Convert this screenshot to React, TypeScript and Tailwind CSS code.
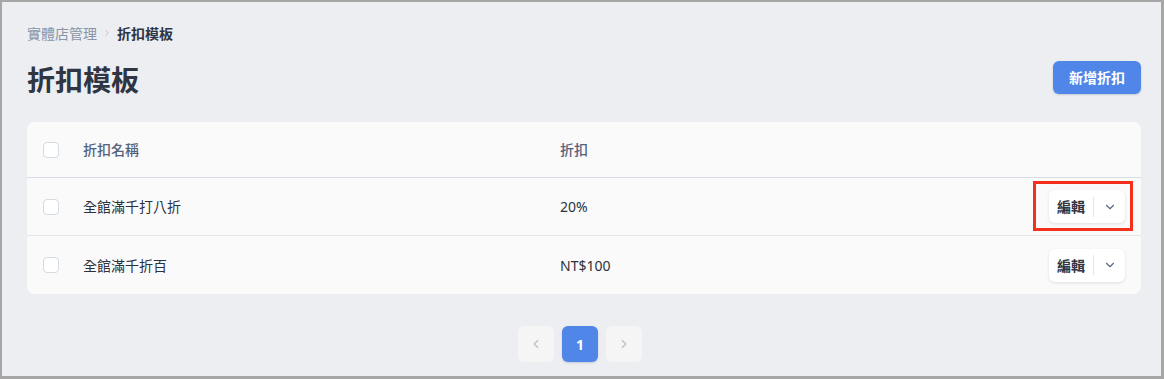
import { ChevronDown, ChevronLeft, ChevronRight } from 'lucide-react';

const rows = [
    { name: '全館滿千打八折', value: '20%', marked: true },
    { name: '全館滿千折百', value: 'NT$100', marked: false },
];

function Checkbox() {
    return <div className="w-4 h-4 rounded-[4px] border border-[#d3dbe5] bg-white shrink-0" />;
}

function EditButton() {
    return (
        <div className="flex items-center h-[33px] rounded-md bg-white shadow-[0_1px_3px_rgba(30,40,60,0.12)]">
            <button className="w-[44px] h-full text-[14px] font-bold text-[#2f3542]">編輯</button>
            <div className="w-px h-[20px] bg-[#e2e5ea]" />
            <button className="w-[31px] h-full flex items-center justify-center text-[#5a6785]">
                <ChevronDown className="w-[14px] h-[14px]" strokeWidth={2} />
            </button>
        </div>
    );
}

export default function App() {
    return (
        <div
            className="w-[1164px] h-[379px] overflow-hidden bg-[#edeef1] border-l-2 border-t-2 border-r-[3px] border-b-[3px] border-[#a6a6a6]"
            style={{ fontFamily: '"Noto Sans", "Noto Sans CJK TC", sans-serif' }}
        >
            <div className="pl-[25px] pr-[20px] pt-[21px]">
                {/* breadcrumb */}
                <div className="flex items-center h-[20px] text-[14px]">
                    <span className="text-[#8a94a7]">實體店管理</span>
                    <ChevronRight className="w-[10px] h-[10px] mx-[5px] text-[#b3bac6]" strokeWidth={2} />
                    <span className="font-bold text-[#2f3542]">折扣模板</span>
                </div>

                <div className="flex items-start justify-between mt-[18px]">
                    <h1 className="text-[28px] leading-[38px] font-bold text-[#2f3542]">折扣模板</h1>
                    <button className="h-[33px] w-[88px] rounded-md bg-[#4f86e8] text-white text-[14px] font-bold shadow-[0_1px_2px_rgba(40,60,110,0.2)]">
                        新增折扣
                    </button>
                </div>

                {/* table */}
                <div className="mt-[23px] rounded-lg bg-[#fafafa]">
                    <div className="flex items-center h-[56px] px-4 border-b border-[#d6dde8] text-[14px] font-medium text-[#55627e]">
                        <Checkbox />
                        <div className="w-[477px] ml-6">折扣名稱</div>
                        <div>折扣</div>
                    </div>
                    {rows.map((r, i) => (
                        <div
                            key={r.name}
                            className={`relative flex items-center h-[58px] px-4 text-[14px] text-[#2d323c] ${i < rows.length - 1 ? 'border-b border-[#e3e5e9]' : ''}`}
                        >
                            <Checkbox />
                            <div className="w-[477px] ml-6">{r.name}</div>
                            <div className="flex-1">{r.value}</div>
                            <EditButton />
                            {r.marked && (
                                <div className="absolute right-[8px] top-[3px] w-[100px] h-[50px] border-[3px] border-[#f2301b]" />
                            )}
                        </div>
                    ))}
                </div>

                {/* pagination */}
                <div className="flex justify-center gap-2 mt-[32px] pr-[8px]">
                    <button className="w-9 h-9 rounded-md bg-[#f5f5f6] flex items-center justify-center text-[#b9bdc9]">
                        <ChevronLeft className="w-[14px] h-[14px]" strokeWidth={2} />
                    </button>
                    <button className="w-9 h-9 rounded-md bg-[#4f86e8] text-white text-[14px] font-bold shadow-[0_1px_2px_rgba(40,60,110,0.2)]">
                        1
                    </button>
                    <button className="w-9 h-9 rounded-md bg-[#f5f5f6] flex items-center justify-center text-[#b9bdc9]">
                        <ChevronRight className="w-[14px] h-[14px]" strokeWidth={2} />
                    </button>
                </div>
            </div>
        </div>
    );
}
